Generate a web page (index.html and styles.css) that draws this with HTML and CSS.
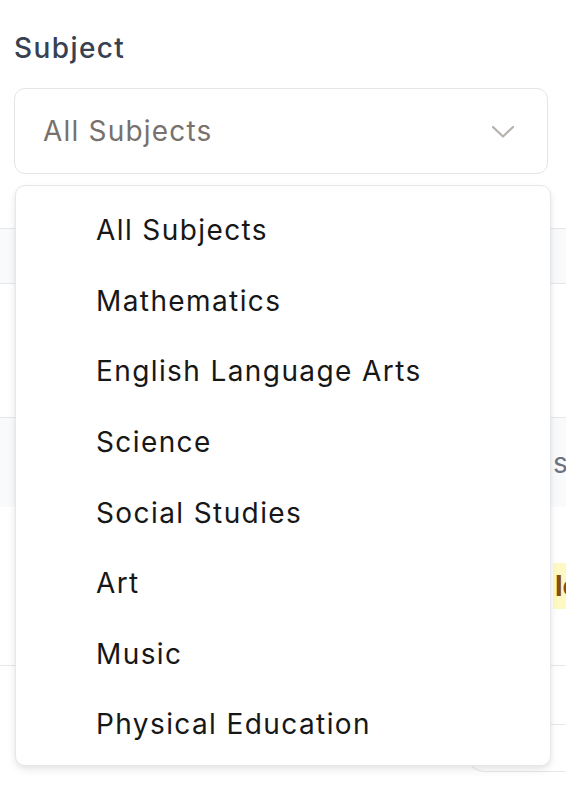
FILE: index.html
```html
<!DOCTYPE html>
<html>
<head>
<meta charset="utf-8">
<link rel="stylesheet" href="styles.css">
</head>
<body>
<div class="page">
  <div class="field">
    <label class="label">Subject</label>
    <div class="select">
      <span class="select-value">All Subjects</span>
      <svg class="chevron" width="22" height="12" viewBox="0 0 22 12"><path d="M1 1 L11 10.5 L21 1" fill="none" stroke="#b5b1ad" stroke-width="2.2" stroke-linecap="round" stroke-linejoin="round"/></svg>
    </div>
  </div>

  <div class="table">
    <div class="row row-head"></div>
    <div class="row row-a"></div>
    <div class="row row-b"><span class="cell-text">s</span></div>
    <div class="row row-c"><span class="badge">lo</span></div>
    <div class="row row-d"><span class="pill"></span></div>
  </div>

  <ul class="menu">
    <li class="menu-item">All Subjects</li>
    <li class="menu-item">Mathematics</li>
    <li class="menu-item">English Language Arts</li>
    <li class="menu-item">Science</li>
    <li class="menu-item">Social Studies</li>
    <li class="menu-item">Art</li>
    <li class="menu-item">Music</li>
    <li class="menu-item">Physical Education</li>
  </ul>
</div>
</body>
</html>
```

FILE: styles.css
```css
html, body {
  margin: 0;
  padding: 0;
  background: #ffffff;
}
body {
  font-family: Inter, "Noto Sans", "Liberation Sans", sans-serif;
  width: 566px;
  height: 786px;
  overflow: hidden;
}
.page {
  position: relative;
  padding-top: 30px;
}
.field {
  padding: 0 18px 0 14px;
  display: flex;
  flex-direction: column;
  gap: 22px;
}
.label {
  display: block;
  font-size: 28px;
  line-height: 36px;
  color: #374151;
  font-weight: 500;
  letter-spacing: 1.4px;
}
.select {
  box-sizing: border-box;
  height: 86px;
  border: 1.5px solid #e5e5e5;
  border-radius: 11px;
  display: flex;
  align-items: center;
  justify-content: space-between;
  padding: 0 33px 0 28px;
  background: #fff;
}
.select-value {
  font-size: 28px;
  color: #78716c;
  letter-spacing: 1.2px;
}
.chevron {
  display: block;
  margin-top: 1px;
}
.table {
  margin-top: 54px;
  display: flex;
  flex-direction: column;
}
.row {
  border-top: 1.5px solid #e5e7eb;
  box-sizing: border-box;
  display: flex;
}
.row-head {
  height: 55px;
  background: #f9fafb;
}
.row-a {
  height: 134px;
}
.row-b {
  height: 90px;
  background: #f9fafb;
  align-items: center;
  padding-left: 553px;
}
.cell-text {
  font-size: 28px;
  color: #6b7280;
}
.row-c {
  border-top: none;
  height: 158px;
  padding-left: 553px;
  padding-top: 56px;
}
.badge {
  display: inline-block;
  flex-shrink: 0;
  height: 46px;
  line-height: 46px;
  padding: 0 10px 0 2px;
  background: #fef9c3;
  color: #854d0e;
  font-weight: 700;
  font-size: 28px;
  white-space: nowrap;
}
.row-d {
  height: 121px;
  justify-content: flex-end;
  align-items: flex-end;
  padding-bottom: 14px;
}
.pill {
  display: block;
  width: 140px;
  height: 46px;
  margin-right: -40px;
  border: 1.5px solid #e5e7eb;
  border-radius: 22px;
}
.menu {
  position: absolute;
  top: 185px;
  left: 15px;
  width: 536px;
  box-sizing: border-box;
  margin: 0;
  padding: 9px 0 5px;
  list-style: none;
  background: #fff;
  border: 1.5px solid #e5e7eb;
  border-radius: 10px;
  box-shadow: 0 4px 8px rgba(0, 0, 0, 0.08), 0 2px 4px rgba(0, 0, 0, 0.04);
}
.menu-item {
  height: 70.6px;
  display: flex;
  align-items: center;
  padding-left: 80px;
  font-size: 28px;
  color: #171717;
  letter-spacing: 1.4px;
}
```
